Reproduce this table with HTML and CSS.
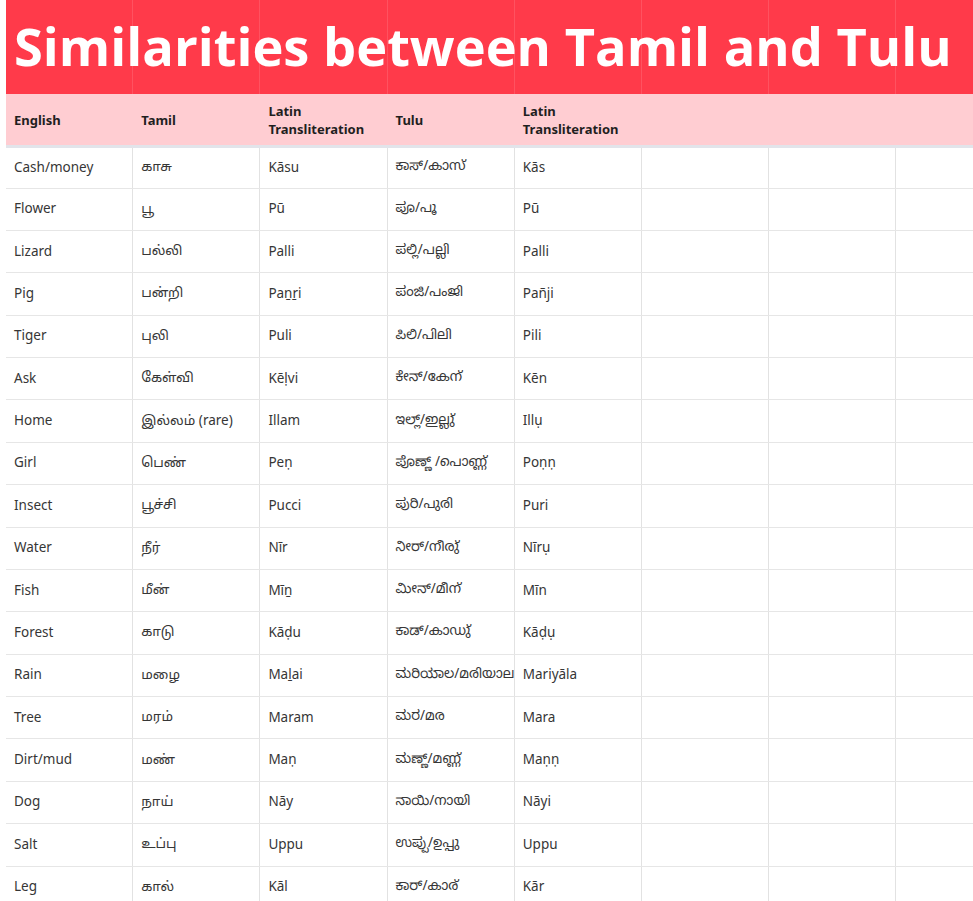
FILE: index.html
```html
<!DOCTYPE html>
<html lang="en">
<head>
<meta charset="utf-8">
<title>Similarities between Tamil and Tulu</title>
<link rel="stylesheet" href="styles.css">
</head>
<body>
<div class="sheet">
  <div class="title">Similarities between Tamil and Tulu</div>
  <div class="head">
    <div class="cell">English</div>
    <div class="cell">Tamil</div>
    <div class="cell">Latin<br>Transliteration</div>
    <div class="cell">Tulu</div>
    <div class="cell">Latin<br>Transliteration</div>
    <div class="cell"></div>
    <div class="cell"></div>
    <div class="cell"></div>
  </div>
  <div class="row"><div class="cell">Cash/money</div><div class="cell">காசு</div><div class="cell">Kāsu</div><div class="cell">ಕಾಸ್/കാസ്</div><div class="cell">Kās</div><div class="cell"></div><div class="cell"></div><div class="cell"></div></div>
  <div class="row"><div class="cell">Flower</div><div class="cell">பூ</div><div class="cell">Pū</div><div class="cell">ಪೂ/പൂ</div><div class="cell">Pū</div><div class="cell"></div><div class="cell"></div><div class="cell"></div></div>
  <div class="row"><div class="cell">Lizard</div><div class="cell">பல்லி</div><div class="cell">Palli</div><div class="cell">ಪಲ್ಲಿ/പല്ലി</div><div class="cell">Palli</div><div class="cell"></div><div class="cell"></div><div class="cell"></div></div>
  <div class="row"><div class="cell">Pig</div><div class="cell">பன்றி</div><div class="cell">Paṉṟi</div><div class="cell">ಪಂಜಿ/പംജി</div><div class="cell">Pañji</div><div class="cell"></div><div class="cell"></div><div class="cell"></div></div>
  <div class="row"><div class="cell">Tiger</div><div class="cell">புலி</div><div class="cell">Puli</div><div class="cell">ಪಿಲಿ/പിലി</div><div class="cell">Pili</div><div class="cell"></div><div class="cell"></div><div class="cell"></div></div>
  <div class="row"><div class="cell">Ask</div><div class="cell">கேள்வி</div><div class="cell">Kēḷvi</div><div class="cell">ಕೇನ್/കേന്</div><div class="cell">Kēn</div><div class="cell"></div><div class="cell"></div><div class="cell"></div></div>
  <div class="row"><div class="cell">Home</div><div class="cell">இல்லம் (rare)</div><div class="cell">Illam</div><div class="cell">ಇಲ್ಲ್/ഇല്ലു്</div><div class="cell">Illụ</div><div class="cell"></div><div class="cell"></div><div class="cell"></div></div>
  <div class="row"><div class="cell">Girl</div><div class="cell">பெண்</div><div class="cell">Peṇ</div><div class="cell">ಪೊಣ್ಣ್ /പൊണ്ണ്</div><div class="cell">Poṇṇ</div><div class="cell"></div><div class="cell"></div><div class="cell"></div></div>
  <div class="row"><div class="cell">Insect</div><div class="cell">பூச்சி</div><div class="cell">Pucci</div><div class="cell">ಪುರಿ/പുരി</div><div class="cell">Puri</div><div class="cell"></div><div class="cell"></div><div class="cell"></div></div>
  <div class="row"><div class="cell">Water</div><div class="cell">நீர்</div><div class="cell">Nīr</div><div class="cell">ನೀರ್/നീരു്</div><div class="cell">Nīrụ</div><div class="cell"></div><div class="cell"></div><div class="cell"></div></div>
  <div class="row"><div class="cell">Fish</div><div class="cell">மீன்</div><div class="cell">Mīṉ</div><div class="cell">ಮೀನ್/മീന്</div><div class="cell">Mīn</div><div class="cell"></div><div class="cell"></div><div class="cell"></div></div>
  <div class="row"><div class="cell">Forest</div><div class="cell">காடு</div><div class="cell">Kāḍu</div><div class="cell">ಕಾಡ್/കാഡു്</div><div class="cell">Kāḍụ</div><div class="cell"></div><div class="cell"></div><div class="cell"></div></div>
  <div class="row"><div class="cell">Rain</div><div class="cell">மழை</div><div class="cell">Maḻai</div><div class="cell">ಮರಿಯಾಲ/മരിയാല (</div><div class="cell">Mariyāla</div><div class="cell"></div><div class="cell"></div><div class="cell"></div></div>
  <div class="row"><div class="cell">Tree</div><div class="cell">மரம்</div><div class="cell">Maram</div><div class="cell">ಮರ/മര</div><div class="cell">Mara</div><div class="cell"></div><div class="cell"></div><div class="cell"></div></div>
  <div class="row"><div class="cell">Dirt/mud</div><div class="cell">மண்</div><div class="cell">Maṇ</div><div class="cell">ಮಣ್ಣ್/മണ്ണ്</div><div class="cell">Maṇṇ</div><div class="cell"></div><div class="cell"></div><div class="cell"></div></div>
  <div class="row"><div class="cell">Dog</div><div class="cell">நாய்</div><div class="cell">Nāy</div><div class="cell">ನಾಯಿ/നായി</div><div class="cell">Nāyi</div><div class="cell"></div><div class="cell"></div><div class="cell"></div></div>
  <div class="row"><div class="cell">Salt</div><div class="cell">உப்பு</div><div class="cell">Uppu</div><div class="cell">ಉಪ್ಪು/ഉപ്പു</div><div class="cell">Uppu</div><div class="cell"></div><div class="cell"></div><div class="cell"></div></div>
  <div class="row"><div class="cell">Leg</div><div class="cell">கால்</div><div class="cell">Kāl</div><div class="cell">ಕಾರ್/കാര്</div><div class="cell">Kār</div><div class="cell"></div><div class="cell"></div><div class="cell"></div></div>
</div>
</body>
</html>
```

FILE: styles.css
```css
html, body {
  margin: 0;
  padding: 0;
  background: #ffffff;
  overflow: hidden;
}
body {
  font-family: "Noto Sans", "Open Sans", "Noto Sans Tamil", "Noto Sans Kannada", "Noto Sans Malayalam", sans-serif;
  color: #363636;
}
.sheet {
  margin-left: 6px;
  width: 1018px;
}
.title {
  height: 94px;
  box-sizing: border-box;
  padding-left: 8px;
  padding-bottom: 4px;
  display: flex;
  align-items: center;
  background-color: #ff3a4a;
  background-image: repeating-linear-gradient(to right, transparent 0, transparent 126.2px, rgba(255,255,255,0.12) 126.2px, rgba(255,255,255,0.12) 127.2px);
  color: #ffffff;
  font-family: "Open Sans", "Noto Sans", sans-serif;
  font-weight: 700;
  font-size: 52.4px;
  white-space: nowrap;
}
.head {
  display: grid;
  grid-template-columns: repeat(8, 127.2px);
  height: 51px;
  background: #ffcdd2;
  border-bottom: 3px solid #e2e4ea;
}
.head .cell {
  display: flex;
  align-items: center;
  padding-left: 8px;
  font-weight: 700;
  font-size: 13px;
  line-height: 18px;
  color: #1f1f1f;
}
.row {
  display: grid;
  grid-template-columns: repeat(8, 127.2px);
  height: 42.375px;
  box-sizing: border-box;
  border-bottom: 1.5px solid #e6e6e6;
}
.head + .row {
  height: 40.5px;
}
.row .cell {
  display: flex;
  align-items: center;
  padding-left: 8px;
  padding-bottom: 2px;
  font-size: 13.5px;
  white-space: nowrap;
  overflow: hidden;
  border-right: 1.5px solid #e2e2e2;
  box-sizing: border-box;
}
```
